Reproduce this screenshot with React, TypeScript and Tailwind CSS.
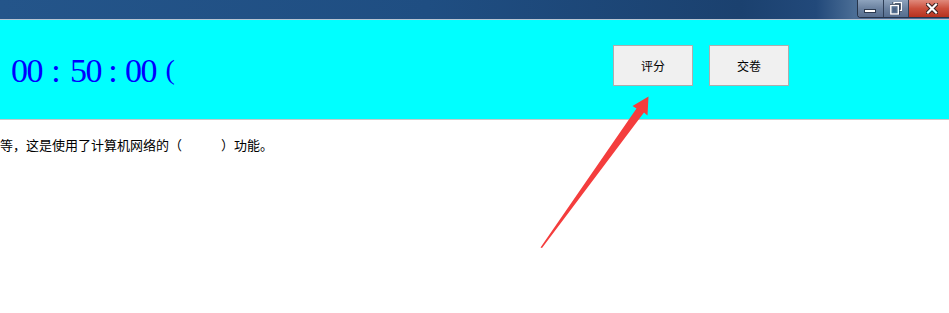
import React from "react";

const serif = { fontFamily: '"Liberation Serif", "Times New Roman", serif' };
const cjk = { fontFamily: '"Noto Sans CJK SC", "Noto Sans", sans-serif' };

function Digit({ c }: { c: string }) {
  return <span className="inline-block w-[15.5px] text-center">{c}</span>;
}
function Colon({ w }: { w: string }) {
  return <span className={`inline-block text-center ${w}`}>:</span>;
}

export default function App() {
  return (
    <div className="relative w-[949px] h-[313px] overflow-hidden bg-white">
      {/* title bar */}
      <div className="flex h-[20px] justify-end border-b border-[#b7c5d3] bg-[linear-gradient(90deg,#24558a_0%,#1f4e82_45%,#1b416f_78%,#22497a_86%,#4a6d95_90%)]">
        <div className="flex h-[18px] w-[92px] overflow-hidden rounded-bl-[4px] border-b border-l border-[#26354b] shadow-[inset_1px_0_0_#9fb2c8]">
          <div className="flex w-[28px] items-center justify-center border-r border-[#2e3f57] bg-[linear-gradient(180deg,#8ea3bd_0%,#6b82a0_50%,#556e8f_100%)]">
            <div className="mt-[4px] h-[4px] w-[12px] border border-[#2b3a50] bg-white" />
          </div>
          <div className="flex w-[28px] items-center justify-center border-r border-[#2e3f57] bg-[linear-gradient(180deg,#8ea3bd_0%,#6b82a0_50%,#556e8f_100%)]">
            <svg width="12" height="13" viewBox="0 0 12 13">
              <rect x="4" y="0.5" width="7.5" height="8" fill="none" stroke="#2b3a50" strokeWidth="3" />
              <rect x="4" y="0.5" width="7.5" height="8" fill="none" stroke="#ffffff" strokeWidth="1.4" />
              <rect x="0.8" y="3.5" width="7.5" height="8.5" fill="#56708f" stroke="#2b3a50" strokeWidth="3" />
              <rect x="0.8" y="3.5" width="7.5" height="8.5" fill="#56708f" stroke="#ffffff" strokeWidth="1.4" />
              <rect x="3" y="6" width="3" height="4" fill="#4a6385" />
            </svg>
          </div>
          <div className="flex w-[40px] shrink-0 items-center pl-[17px] bg-[linear-gradient(180deg,#e08a7c_0%,#cc4f3c_50%,#b6321f_100%)]">
            <svg width="12" height="11" viewBox="0 0 12 11">
              <path d="M2 1.5 L10 9.5 M10 1.5 L2 9.5" stroke="#3a2020" strokeWidth="4.2" strokeLinecap="square" />
              <path d="M2 1.5 L10 9.5 M10 1.5 L2 9.5" stroke="#ffffff" strokeWidth="2.2" strokeLinecap="square" />
            </svg>
          </div>
        </div>
      </div>

      {/* cyan header */}
      <div className="flex h-[100px] border-b border-[#c8c8c8] bg-[#00ffff]">
        <div className="w-[613px] pl-[11px] pt-[34px]">
          <div className="flex h-[34px] items-baseline text-[34px] leading-[34px] text-[#0000ff]" style={serif}>
            <Digit c="0" />
            <Digit c="0" />
            <Colon w="w-[28px]" />
            <Digit c="5" />
            <Digit c="0" />
            <Colon w="w-[24px]" />
            <Digit c="0" />
            <Digit c="0" />
            <span className="ml-[9.5px] inline-block -translate-y-[3px] text-[28px]">(</span>
          </div>
        </div>
        <div className="flex gap-[16px] pt-[25px]">
          <button className="h-[41px] w-[80px] border border-[#adadad] bg-[#f0f0f0] text-[12px] text-black" style={cjk}>
            评分
          </button>
          <button className="h-[41px] w-[80px] border border-[#adadad] bg-[#f0f0f0] text-[12px] text-black" style={cjk}>
            交卷
          </button>
        </div>
      </div>

      {/* question text */}
      <div className="pt-[17px] text-[13px] leading-[16px] text-black whitespace-pre" style={cjk}>
        等，这是使用了计算机网络的（　　　）功能。
      </div>

      {/* annotation arrow */}
      <svg className="pointer-events-none absolute left-0 top-0" width="949" height="313" viewBox="0 0 949 313">
        <polygon
          points="540.5,247.5 636.5,108.5 632.5,106 648.5,96.5 647.5,115.5 644,112.5 542,248"
          fill="#f43d3d"
        />
      </svg>
    </div>
  );
}
